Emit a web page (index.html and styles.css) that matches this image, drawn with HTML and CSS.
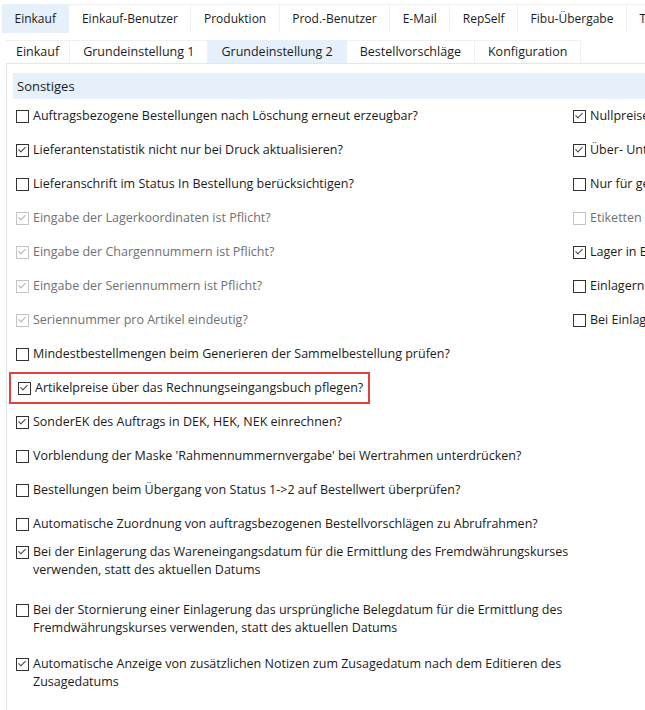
FILE: index.html
```html
<!DOCTYPE html>
<html>
<head>
    <title>Einstellungen Einkauf</title>
    <link rel="stylesheet" href="styles.css">
</head>
<body>
    <div class="window">
        <div class="tabs main-tabs">
            <div class="tab active">Einkauf</div>
            <div class="tab">Einkauf-Benutzer</div>
            <div class="tab">Produktion</div>
            <div class="tab">Prod.-Benutzer</div>
            <div class="tab">E-Mail</div>
            <div class="tab">RepSelf</div>
            <div class="tab">Fibu-Übergabe</div>
            <div class="tab">Textbausteine</div>
        </div>

        <div class="tabs sub-tabs">
            <div class="tab">Einkauf</div>
            <div class="tab">Grundeinstellung 1</div>
            <div class="tab active">Grundeinstellung 2</div>
            <div class="tab">Bestellvorschläge</div>
            <div class="tab">Konfiguration</div>
        </div>

        <div class="panel">
            <div class="group-title">Sonstiges</div>

            <!-- two columns at the top -->
            <div class="columns">
                <div class="list">
                    <label class="option"><span class="box"></span>Auftragsbezogene Bestellungen nach Löschung erneut erzeugbar?</label>
                    <label class="option"><span class="box on"></span>Lieferantenstatistik nicht nur bei Druck aktualisieren?</label>
                    <label class="option"><span class="box"></span>Lieferanschrift im Status In Bestellung berücksichtigen?</label>
                    <label class="option disabled"><span class="box on"></span>Eingabe der Lagerkoordinaten ist Pflicht?</label>
                    <label class="option disabled"><span class="box on"></span>Eingabe der Chargennummern ist Pflicht?</label>
                    <label class="option disabled"><span class="box on"></span>Eingabe der Seriennummern ist Pflicht?</label>
                    <label class="option disabled"><span class="box on"></span>Seriennummer pro Artikel eindeutig?</label>
                </div>
                <div class="list">
                    <label class="option"><span class="box on"></span>Nullpreise in Bestellungen erlauben?</label>
                    <label class="option"><span class="box on"></span>Über- Unterlieferung zulassen?</label>
                    <label class="option"><span class="box"></span>Nur für gesperrte Lieferanten?</label>
                    <label class="option disabled"><span class="box"></span>Etiketten immer drucken?</label>
                    <label class="option"><span class="box on"></span>Lager in Bestellung vorbelegen?</label>
                    <label class="option"><span class="box"></span>Einlagern ohne Bestellung erlauben?</label>
                    <label class="option"><span class="box"></span>Bei Einlagerung Preis übernehmen?</label>
                </div>
            </div>

            <div class="list wide">
                <label class="option"><span class="box"></span>Mindestbestellmengen beim Generieren der Sammelbestellung prüfen?</label>
                <label class="option marked"><span class="box on"></span>Artikelpreise über das Rechnungseingangsbuch pflegen?</label>
                <label class="option"><span class="box on"></span>SonderEK des Auftrags in DEK, HEK, NEK einrechnen?</label>
                <label class="option"><span class="box"></span>Vorblendung der Maske 'Rahmennummernvergabe' bei Wertrahmen unterdrücken?</label>
                <label class="option"><span class="box"></span>Bestellungen beim Übergang von Status 1-&gt;2 auf Bestellwert überprüfen?</label>
                <label class="option"><span class="box"></span>Automatische Zuordnung von auftragsbezogenen Bestellvorschlägen zu Abrufrahmen?</label>
                <label class="option multi-1"><span class="box on"></span><span>Bei der Einlagerung das Wareneingangsdatum für die Ermittlung des Fremdwährungskurses<br>verwenden, statt des aktuellen Datums</span></label>
                <label class="option multi-2"><span class="box"></span><span>Bei der Stornierung einer Einlagerung das ursprüngliche Belegdatum für die Ermittlung des<br>Fremdwährungskurses verwenden, statt des aktuellen Datums</span></label>
                <label class="option multi-3"><span class="box on"></span><span>Automatische Anzeige von zusätzlichen Notizen zum Zusagedatum nach dem Editieren des<br>Zusagedatums</span></label>
            </div>
        </div>
    </div>
</body>
</html>
```

FILE: styles.css
```css
body {
    margin: 0;
    background: #fff;
    font-family: 'Open Sans', 'Noto Sans', Arial, sans-serif;
    font-size: 12.5px;
    color: #1b1b1b;
    overflow: hidden;
}
.window {
    width: 645px;
    height: 710px;
    overflow: hidden;
}
.tabs {
    display: flex;
    white-space: nowrap;
}
.tab {
    flex: none;
    border-right: 1px solid #f0f0f0;
    border-top: 1px solid #f0f0f0;
}
.tab.active { background-color: #e5f0fb; border-color: #e5f0fb; }
.main-tabs {
    margin: 4px 0 0 2px;
    height: 29px;
}
.main-tabs .tab {
    padding: 0 12.5px;
    line-height: 28px;
    font-size: 12px;
}
.sub-tabs {
    margin: 7px 0 0 6px;
    height: 23px;
    border-bottom: 1px solid #e6e6e6;
}
.sub-tabs .tab {
    padding: 0 13px;
    line-height: 22px;
    font-size: 12.5px;
}
.sub-tabs .tab:first-child { padding: 0 10px; }
.panel {
    margin-left: 6px;
    border-left: 1px solid #e3e3e3;
    min-height: 660px;
    padding-top: 9px;
}
.group-title {
    margin-left: 6px;
    background-color: #e5f0fb;
    height: 26px;
    line-height: 27px;
    padding-left: 4px;
    font-size: 13px;
}
.columns {
    display: grid;
    grid-template-columns: 557px 1fr;
}
.list {
    display: flex;
    flex-direction: column;
    gap: 16px;
    padding-top: 8px;
}
.list.wide { padding-top: 16px; }
.option {
    display: flex;
    align-items: flex-start;
    gap: 4px;
    padding-left: 9px;
    line-height: 18px;
    white-space: nowrap;
}
.option.disabled { color: #707070; }
.option.marked {
    margin: -7px 0 -7px 2px;
    padding: 5px 0 5px 7px;
    width: 350px;
    border: 2px solid #e3403f;
}
.option.multi-1 { margin-top: -6px; }
.option.multi-2 { margin-top: 6px; }
.option.multi-3 { margin-top: 2px; }
.box {
    position: relative;
    flex: none;
    width: 11px;
    height: 11px;
    margin-top: 3px;
    border: 1px solid #333;
    background: #fff;
}
.box.on::after {
    content: '';
    position: absolute;
    left: 2px;
    top: 2px;
    width: 6px;
    height: 3px;
    border-left: 1px solid #444;
    border-bottom: 1px solid #444;
    transform: rotate(-45deg);
    transform-origin: 40% 60%;
}
.disabled .box { border-color: #c4c4c4; }
.disabled .box.on::after { border-color: #b0b0b0; }
```
